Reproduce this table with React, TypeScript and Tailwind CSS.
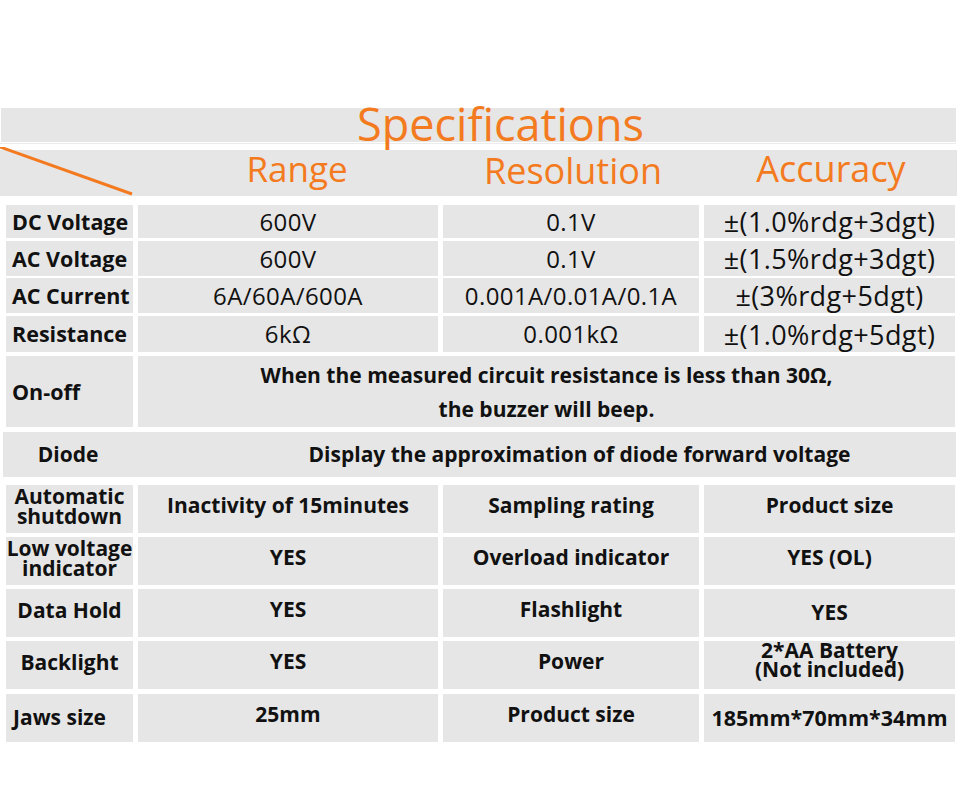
import React from 'react';

const cell = 'bg-[#e6e6e6] flex items-center justify-center whitespace-nowrap';

const topRows = [
    { label: 'DC Voltage', range: '600V', res: '0.1V', acc: '±(1.0%rdg+3dgt)', h: 'h-[33px]', mt: 'mt-[9px]' },
    { label: 'AC Voltage', range: '600V', res: '0.1V', acc: '±(1.5%rdg+3dgt)', h: 'h-[35px]', mt: 'mt-[3px]' },
    { label: 'AC Current', range: '6A/60A/600A', res: '0.001A/0.01A/0.1A', acc: '±(3%rdg+5dgt)', h: 'h-[35px]', mt: 'mt-[2px]' },
    { label: 'Resistance', range: '6kΩ', res: '0.001kΩ', acc: '±(1.0%rdg+5dgt)', h: 'h-[36px]', mt: 'mt-[3px]' },
];

const bottomRows = [
    { label: ['Automatic', 'shutdown'], a: 'Inactivity of 15minutes', b: 'Sampling rating', c: ['Product size'], mt: 'mt-[8px]', left: false, cpad: 'pb-[8px]' },
    { label: ['Low voltage', 'indicator'], a: 'YES', b: 'Overload indicator', c: ['YES (OL)'], mt: 'mt-[4px]', left: false, cpad: 'pb-[8px]' },
    { label: ['Data Hold'], a: 'YES', b: 'Flashlight', c: ['YES'], mt: 'mt-[4px]', left: false, cpad: 'pb-[2px]' },
    { label: ['Backlight'], a: 'YES', b: 'Power', c: ['2*AA Battery', '(Not included)'], mt: 'mt-[4px]', left: false, cpad: 'pb-[10px]' },
    { label: ['Jaws size'], a: '25mm', b: 'Product size', c: ['185mm*70mm*34mm'], mt: 'mt-[5px]', left: true, cpad: 'pb-[2px]' },
];

export default function App() {
    return (
        <div className="w-[960px] h-[796px] bg-white text-[#111] font-['Open_Sans',sans-serif] pt-[108px]">
            {/* Title band */}
            <div className="ml-[1px] w-[955px] h-[34px] bg-[#e6e6e6] flex justify-center pl-[44px]">
                <span className="text-[45px] leading-none text-[#f47a20] -mt-[7px]">Specifications</span>
            </div>
            <div className="mt-[1px] h-px w-[956px] bg-[#ececec]" />

            {/* Column headers */}
            <div className="relative mt-[6px] w-[957px] h-[46px] bg-[#e6e6e6]">
                <svg className="absolute left-0 top-[-3px]" width="140" height="52" viewBox="0 0 140 52">
                    <line x1="0" y1="0" x2="132" y2="47" stroke="#f47a20" strokeWidth="3" />
                </svg>
                <div className="grid grid-cols-[127px_300px_256px_251px] gap-x-[5px] pl-[6px] h-full text-[35px] leading-none text-[#f47a20]">
                    <div />
                    <div className="flex items-center justify-center pl-[18px] pb-[9px]">Range</div>
                    <div className="flex items-center justify-center text-[36px] pl-[4px] pb-[4px]">Resolution</div>
                    <div className="flex items-center justify-center text-[36px] pl-[3px] pb-[9px]">Accuracy</div>
                </div>
            </div>

            {/* Measurement rows */}
            {topRows.map((r, i) => (
                <div key={i} className={`grid grid-cols-[127px_300px_256px_251px] gap-x-[5px] pl-[6px] leading-none ${r.h} ${r.mt}`}>
                    <div className={`${cell} !justify-start pl-[6px] text-[21.5px] font-bold`}>{r.label}</div>
                    <div className={`${cell} text-[24px] tracking-[0.4px]`}>{r.range}</div>
                    <div className={`${cell} text-[24px] tracking-[0.4px]`}>{r.res}</div>
                    <div className={`${cell} text-[27px] tracking-[0.4px]`}>{r.acc}</div>
                </div>
            ))}

            {/* On-off */}
            <div className="grid grid-cols-[127px_1fr] gap-x-[5px] pl-[6px] w-[955px] h-[71px] mt-[4px] leading-none">
                <div className={`${cell} !justify-start pl-[6px] text-[21.5px] font-bold`}>On-off</div>
                <div className={`${cell} flex-col text-[21px] font-bold leading-[34px]`}>
                    <span>When the measured circuit resistance is less than 30Ω,</span>
                    <span>the buzzer will beep.</span>
                </div>
            </div>

            {/* Diode */}
            <div className="ml-[3px] w-[953px] h-[45px] mt-[5px] bg-[#e6e6e6] flex items-center text-[21px] font-bold leading-none whitespace-nowrap">
                <div className="w-[130px] flex justify-center">Diode</div>
                <div className="flex-1 flex justify-center pl-[70px]">Display the approximation of diode forward voltage</div>
            </div>

            {/* Other specs */}
            {bottomRows.map((r, i) => (
                <div key={i} className={`grid grid-cols-[127px_300px_256px_251px] gap-x-[5px] pl-[6px] h-[48px] text-[21px] font-bold leading-none ${r.mt}`}>
                    <div className={`${cell} flex-col leading-[20px] pb-[6px] ${r.left ? '!items-start pl-[7px] pt-[4px]' : ''}`}>
                        {r.label.map((l) => <span key={l}>{l}</span>)}
                    </div>
                    <div className={`${cell} pb-[8px]`}>{r.a}</div>
                    <div className={`${cell} pb-[8px]`}>{r.b}</div>
                    <div className={`${cell} flex-col leading-[19px] ${r.cpad}`}>
                        {r.c.map((l) => <span key={l} className={l.startsWith('185') ? 'text-[21.5px]' : ''}>{l}</span>)}
                    </div>
                </div>
            ))}
        </div>
    );
}
